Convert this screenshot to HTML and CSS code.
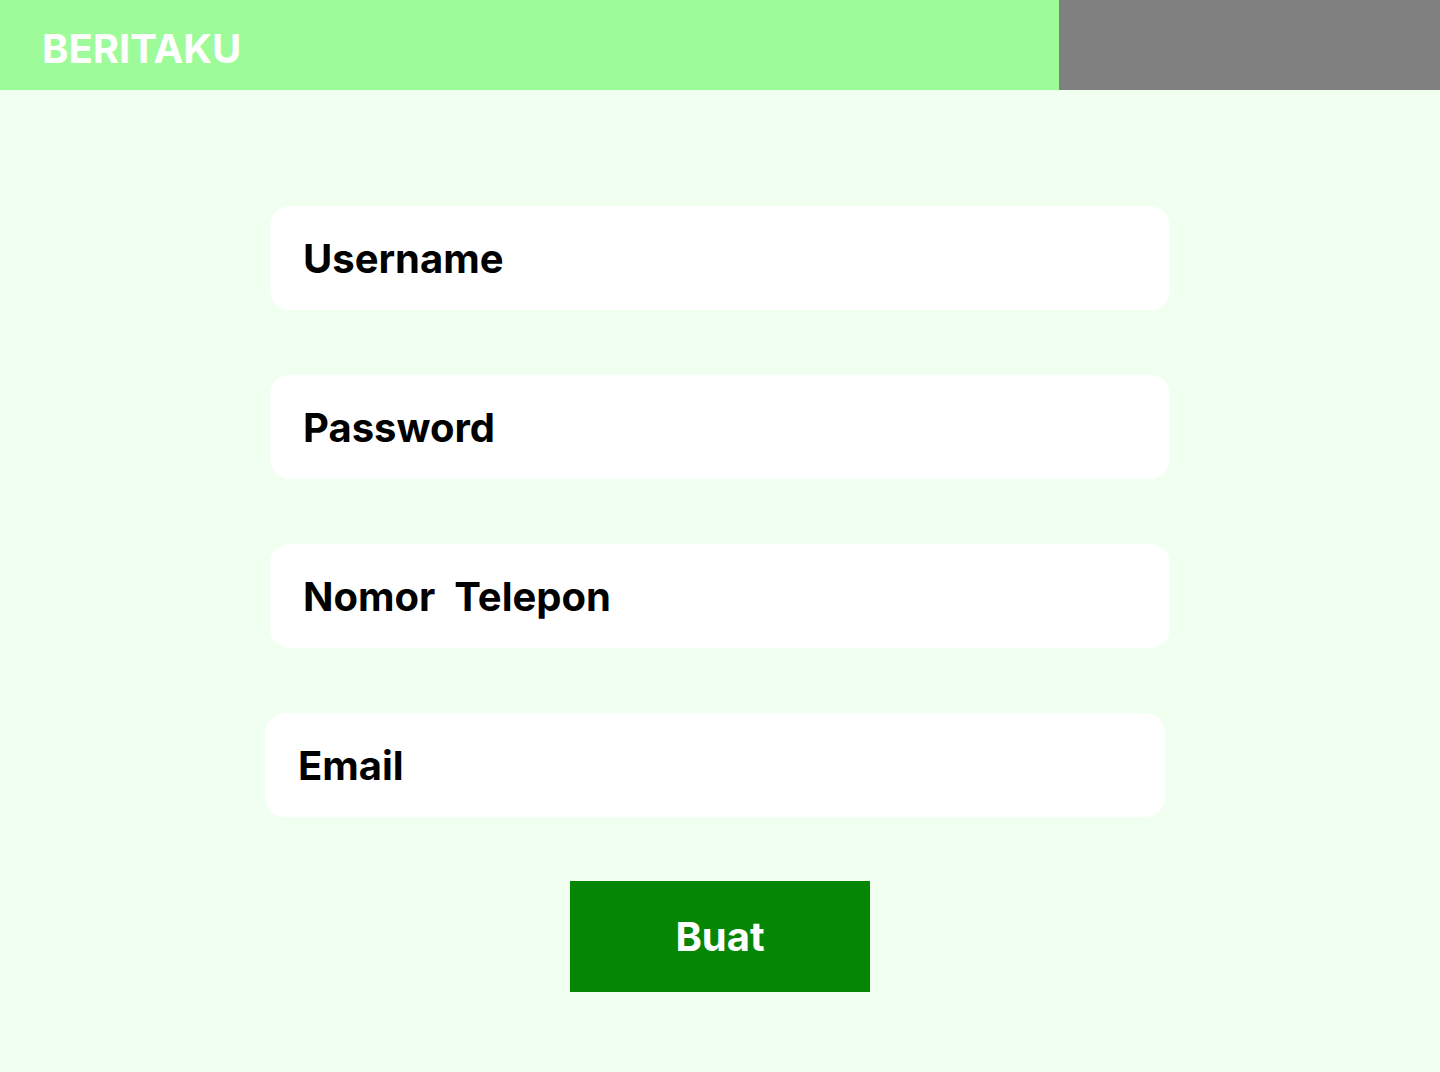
FILE: index.html
```html
<!DOCTYPE html>
<html lang="id">
<head>
<meta charset="utf-8">
<title>Beritaku</title>
<link rel="stylesheet" href="styles.css">
</head>
<body>
<header class="topbar">
  <div class="brand">BERITAKU</div>
  <div class="side"></div>
</header>
<main class="form">
  <div class="field">Username</div>
  <div class="field">Password</div>
  <div class="field">Nomor&nbsp; Telepon</div>
  <div class="field field-shift">Email</div>
  <button class="btn" type="button">Buat</button>
</main>
</body>
</html>
```
FILE: styles.css
```css
* { box-sizing: border-box; }
html, body { margin: 0; padding: 0; }
body {
  background: #f0fff0;
  font-family: Inter, "Liberation Sans", Arial, sans-serif;
  width: 1440px;
  height: 1072px;
  overflow: hidden;
}
.topbar {
  display: flex;
  height: 90px;
}
.brand {
  width: 1059px;
  background: #9efb9a;
  color: #ffffff;
  font-weight: 700;
  font-size: 40px;
  padding-left: 42px;
  padding-top: 7px;
  display: flex;
  align-items: center;
}
.side {
  flex: 1;
  background: #808080;
}
.form {
  display: flex;
  flex-direction: column;
  align-items: center;
  padding-top: 116px;
}
.field {
  width: 900px;
  height: 104px;
  background: #ffffff;
  border-radius: 20px;
  display: flex;
  align-items: center;
  padding-left: 33px;
  font-weight: 700;
  font-size: 40px;
  color: #000000;
  margin-bottom: 65px;
}
.field-shift {
  margin-right: 10px;
  margin-bottom: 64px;
}
.btn {
  width: 300px;
  height: 111px;
  background: #058705;
  color: #ffffff;
  border: none;
  font-family: inherit;
  font-weight: 700;
  font-size: 40px;
  padding: 0;
}
```
